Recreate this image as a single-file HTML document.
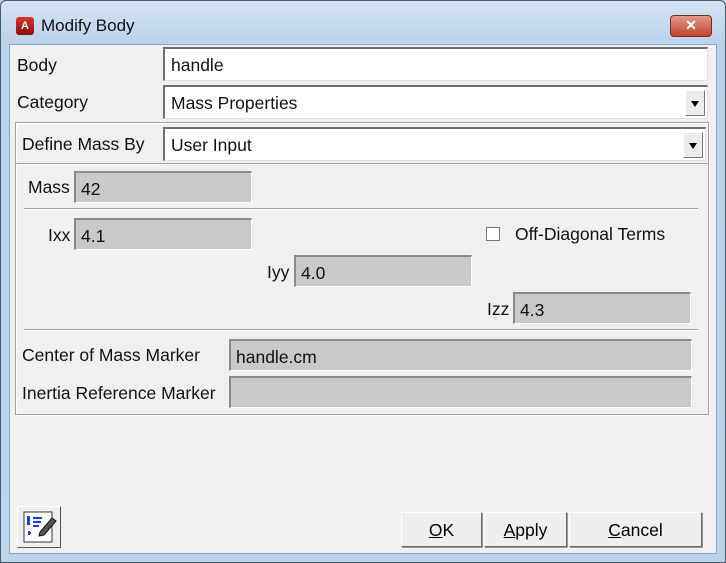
<!DOCTYPE html>
<html><head><style>
*{margin:0;padding:0;box-sizing:border-box}
body{width:726px;height:563px;background:#bcd3ec;font-family:"Liberation Sans",sans-serif;position:relative;overflow:hidden}
.frame{position:absolute;left:0;top:0;width:726px;height:563px;border:1px solid #4a5a6e;border-radius:6px 6px 0 0;background:linear-gradient(#d4e4f4,#b9d1ea 45px,#bcd3ec)}
.client{position:absolute;left:9px;top:44px;width:708px;height:510px;background:#f0f0f0;border:1px solid #8fa5bf}
.a{position:absolute}
.t{position:absolute;font-size:17.5px;color:#111;white-space:nowrap}
.in{position:absolute;background:#fff;border-top:2px solid #6e6e6e;border-left:2px solid #6e6e6e;border-right:1px solid #e0e0e0;border-bottom:1px solid #e0e0e0;font-size:17.5px;padding:6px 0 0 6px;color:#111}
.g{background:#c9c9c9;border-top:2px solid #8a8a8a;border-left:2px solid #8a8a8a;border-right:1px solid #fff;border-bottom:1px solid #fff;padding:6px 0 0 5px}
.dd{position:absolute;right:2px;top:3px;width:20px;height:26px;background:#ececec;border:1px solid #fff;border-right-color:#777;border-bottom-color:#777}
.dd:after{content:"";position:absolute;left:5px;top:10px;border-left:4px solid transparent;border-right:4px solid transparent;border-top:6px solid #000}
.sep{position:absolute;height:2px;border-top:1px solid #a0a0a0;border-bottom:1px solid #fff}
.btn{position:absolute;background:#efefef;border:1px solid #fff;border-right-color:#6a6a6a;border-bottom-color:#6a6a6a;box-shadow:1px 1px 0 #999;font-size:17.5px;text-align:center;padding-top:7px}
</style></head><body>
<div class="frame"></div>
<div class="a" style="left:16px;top:17px;width:18px;height:18px;background:linear-gradient(#d33,#8a0f0f);border-radius:3px;color:#fff;font-size:11px;font-weight:bold;text-align:center;line-height:18px">A</div>
<div class="t" style="left:41px;top:16px;font-size:17px">Modify Body</div>
<div class="a" style="left:670px;top:15px;width:42px;height:22px;background:linear-gradient(#e59a8a,#c0432e);border:1px solid #7a2a20;border-radius:4px;color:#fff;font-weight:bold;font-size:14px;text-align:center;line-height:19px">✕</div>
<div class="client"></div>
<div class="t" style="left:17px;top:55px">Body</div>
<div class="in" style="left:163px;top:47px;width:545px;height:34px">handle</div>
<div class="t" style="left:17px;top:92px">Category</div>
<div class="in" style="left:163px;top:85px;width:545px;height:34px">Mass Properties<div class="dd"></div></div>
<div class="a" style="left:15px;top:122px;width:694px;height:293px;border:1px solid #a0a0a0;box-shadow:inset 1px 1px 0 #fff,1px 1px 0 #fff"></div>
<div class="sep" style="left:16px;top:163px;width:692px"></div>
<div class="t" style="left:22px;top:134px">Define Mass By</div>
<div class="in" style="left:163px;top:127px;width:543px;height:34px">User Input<div class="dd"></div></div>
<div class="t" style="left:28px;top:177px">Mass</div>
<div class="in g" style="left:74px;top:171px;width:178px;height:32px">42</div>
<div class="sep" style="left:24px;top:208px;width:674px"></div>
<div class="t" style="left:48px;top:225px">Ixx</div>
<div class="in g" style="left:74px;top:218px;width:178px;height:32px">4.1</div>
<div class="a" style="left:486px;top:227px;width:14px;height:14px;background:#fff;border:1px solid #777"></div>
<div class="t" style="left:515px;top:224px">Off-Diagonal Terms</div>
<div class="t" style="left:267px;top:262px">Iyy</div>
<div class="in g" style="left:294px;top:255px;width:178px;height:32px">4.0</div>
<div class="t" style="left:487px;top:299px">Izz</div>
<div class="in g" style="left:513px;top:292px;width:178px;height:32px">4.3</div>
<div class="sep" style="left:24px;top:329px;width:674px"></div>
<div class="t" style="left:22px;top:345px">Center of Mass Marker</div>
<div class="in g" style="left:229px;top:339px;width:463px;height:32px">handle.cm</div>
<div class="t" style="left:22px;top:383px">Inertia Reference Marker</div>
<div class="in g" style="left:229px;top:376px;width:463px;height:32px"></div>
<div class="a" style="left:17px;top:506px;width:44px;height:42px;background:#efefef;border:1px solid #fff;border-right-color:#555;border-bottom-color:#555">
<svg width="42" height="40" viewBox="0 0 42 40"><rect x="6" y="5" width="28" height="30" fill="#fff" stroke="#333"/><rect x="9" y="9" width="3" height="9" fill="#1a3fd0"/><path d="M15 11h9M15 15h8M15 19h6M10 26h3M11 24v4" stroke="#1a3fd0" stroke-width="2"/><path d="M22 25l12-14 4 3-12 14-5 1z" fill="#555" stroke="#111"/></svg></div>
<div class="btn" style="left:401px;top:512px;width:81px;height:35px"><u>O</u>K</div>
<div class="btn" style="left:484px;top:512px;width:83px;height:35px"><u>A</u>pply</div>
<div class="btn" style="left:569px;top:512px;width:133px;height:35px"><u>C</u>ancel</div>
</body></html>
